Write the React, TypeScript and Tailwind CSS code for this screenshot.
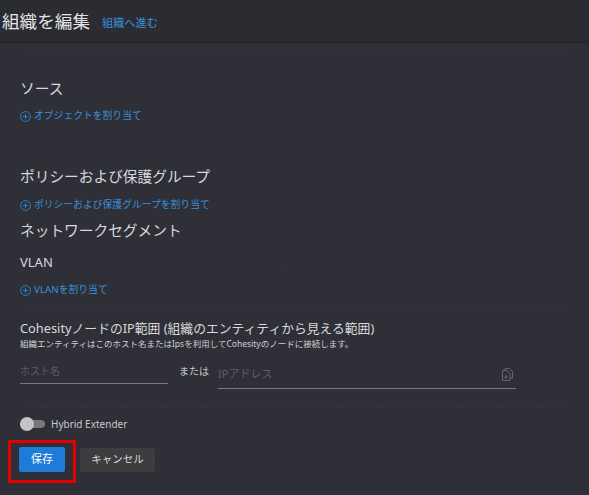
const font = { fontFamily: '"Noto Sans", "Noto Sans CJK JP", sans-serif' };

function Plus() {
  return (
    <svg width="11" height="11" viewBox="0 0 11 11" fill="none" stroke="#2f7fc4" strokeWidth="1" className="shrink-0">
      <circle cx="5.5" cy="5.5" r="4.9" />
      <path d="M5.5 2.8v5.4M2.8 5.5h5.4" />
    </svg>
  );
}

function Assign({ label }: { label: string }) {
  return (
    <div className="flex h-[14px] items-center gap-[3px] text-[9.8px] leading-[14px] text-[#3a8fd6]">
      <Plus />
      <span>{label}</span>
    </div>
  );
}

function Dotted() {
  return <div className="border-t border-dashed border-[#36373e]" />;
}

export default function App() {
  return (
    <div style={font} className="relative flex h-[495px] w-[589px] flex-col overflow-hidden bg-[#2f3037] text-[#d8d8da]">
      <header className="flex h-[41px] shrink-0 items-center gap-[12px] bg-[#2b2c32] pl-[2px] shadow-[0_1px_2px_rgba(0,0,0,0.35)]">
        <h1 className="text-[17.6px] leading-[24px] font-normal text-[#e4e4e6]">組織を編集</h1>
        <a className="mt-[4px] text-[11.2px] leading-[16px] text-[#3a8fd6]">組織へ進む</a>
      </header>

      <main className="flex flex-1 flex-col px-[20px]">
        <div className="mt-[13px]"><Dotted /></div>
        <h2 className="mt-[23px] text-[14.7px] leading-[20px] font-normal">ソース</h2>
        <div className="mt-[11px]"><Assign label="オブジェクトを割り当て" /></div>

        <h2 className="mt-[43px] text-[14.7px] leading-[20px] font-normal">ポリシーおよび保護グループ</h2>
        <div className="mt-[12px]"><Assign label="ポリシーおよび保護グループを割り当て" /></div>
        <h2 className="mt-[8px] text-[14.7px] leading-[20px] font-normal">ネットワークセグメント</h2>
        <h3 className="mt-[12px] text-[13px] leading-[20px] font-normal">VLAN</h3>
        <div className="mt-[11px]"><Assign label="VLANを割り当て" /></div>
        <div className="mt-[8px]"><Dotted /></div>

        <h2 className="mt-[13px] text-[12.8px] leading-[18px] font-normal">CohesityノードのIP範囲 (組織のエンティティから見える範囲)</h2>
        <p className="text-[8.5px] leading-[13px] text-[#cfcfd2]">組織エンティティはこのホスト名またはIpsを利用してCohesityのノードに接続します。</p>

        <div className="mt-[12px] flex items-start">
          <div className="mt-[1px] w-[148px] border-b border-[#77787c] pb-[4px] text-[10px] leading-[16px] text-[#5d5e63]">ホスト名</div>
          <span className="ml-[11px] mt-[1px] text-[10px] leading-[16px] text-[#c8c8ca]">または</span>
          <div className="ml-[9px] flex w-[298px] items-center justify-between border-b border-[#77787c] pb-[6px] pt-[4px] pr-[3px]">
            <span className="text-[11px] leading-[16px] text-[#5d5e63]">IPアドレス</span>
            <svg width="11" height="13" viewBox="0 0 11 13" fill="none" stroke="#66676b" strokeWidth="1">
              <path d="M3 2.5V.5h4.5l3 3v6.5H8" />
              <path d="M.5 2.5h4.5l3 3v7H.5z" />
              <path d="M4 7v4M2.2 9h3.6" />
            </svg>
          </div>
        </div>

        <div className="mt-[18px]"><Dotted /></div>

        <div className="mt-[9px] flex items-center gap-[6px]">
          <div className="relative h-[8px] w-[25px] rounded-full bg-[#77787c]">
            <div className="absolute left-0 top-[-3px] h-[14px] w-[14px] rounded-full bg-[#c4c4c4]" />
          </div>
          <span className="text-[10px] leading-[14px] text-[#c8c8ca]">Hybrid Extender</span>
        </div>

        <div className="mt-[9px] flex items-start gap-[15px]">
          <div className="ml-[-12px] mr-[-11px] border-[3px] border-[#e30000] px-[8px] pt-[4px] pb-[8px]">
            <button className="block h-[25px] w-[46px] rounded-[2px] bg-[#1f7bd8] text-[11px] text-white">保存</button>
          </div>
          <button className="mt-[8px] h-[24px] w-[75px] rounded-[2px] bg-[#3d3d40] text-[10.5px] text-[#d8d8da]">キャンセル</button>
        </div>
      </main>
      <div className="absolute left-[283px] top-[264px] h-px w-px bg-[#c01818]" />
    </div>
  );
}
